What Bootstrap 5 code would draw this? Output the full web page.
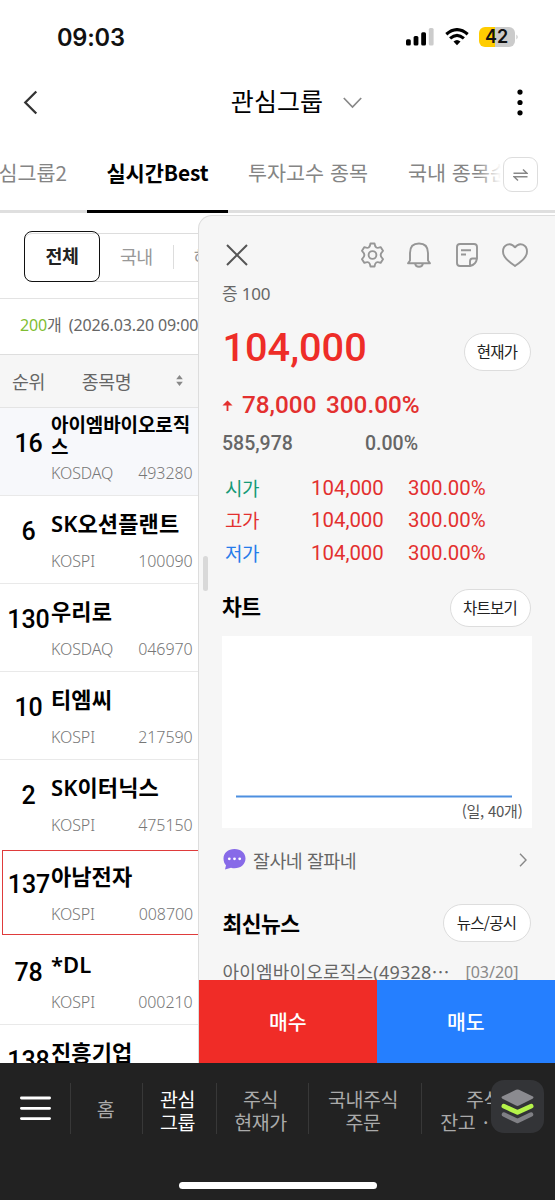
<!DOCTYPE html>
<html lang="ko">
<head>
<meta charset="utf-8">
<meta name="viewport" content="width=device-width, initial-scale=1">
<title>관심그룹</title>
<link href="https://cdn.jsdelivr.net/npm/bootstrap@5.3.0/dist/css/bootstrap.min.css" rel="stylesheet">
<style>
body{font-family:"Noto Sans","Noto Sans CJK KR",sans-serif;color:#111;background:#fff;line-height:1}
.screen{width:555px;height:1200px}
.kr{font-family:"Noto Sans CJK KR",sans-serif}
.rb{font-family:Roboto,sans-serif}
.red{color:#e3302f}
.status{height:75px;font-family:Inter,sans-serif}
.status .clock{font-size:23.6px;font-weight:600;left:57px;letter-spacing:-.2px}
.battery{width:36px;height:20px;border-radius:6px;background:linear-gradient(90deg,#fc0 44%,#cbcbcb 44%);font-size:18px;font-weight:600;line-height:20px;color:#111}
.titlebar{height:56px}
.titlebar h1{font-size:25px;font-weight:400;letter-spacing:.1px;line-height:36px;color:#000}
.tabs{height:82px;border-bottom:3px solid #dfdfdf}
.tabs .tab{height:82px;line-height:83px;font-size:20.7px;color:#858585;white-space:nowrap}
.tabs .tab.active{color:#000;font-weight:700;font-size:20.9px;letter-spacing:-.1px;border-bottom:3px solid #000}
.switcher{right:0;top:0;width:78px;height:79px;padding-left:26px;background:linear-gradient(90deg,#fff0,#fff 24px)}
.switcher .box{width:35px;height:35px;margin-top:8px;border:1px solid #ddd;border-radius:9px;background:#fff}
.main{height:850px}
.listcol{width:198px;flex:none}
.filters{height:85.5px;border-bottom:1.5px solid #e3e3e3;padding:19.5px 0 0 24px}
.filters .strip{width:500px;height:49px;border:1px solid #ddd;border-radius:8px;font-size:18.4px;color:#999}
.filters .all{width:76px;height:51px;margin:-1px 0 0 -1px;border:1.6px solid #111;border-radius:8px;color:#222;font-weight:700;letter-spacing:-.5px}
.stamp{height:56.7px;border-bottom:1.5px solid #dedede;padding:0 0 2px 20px;font-size:16px;color:#666;white-space:nowrap;letter-spacing:-.12px}
.thead-row{height:52.5px;background:#f6f6f6;border-bottom:1.5px solid #e4e4e4;font-size:18.4px;color:#666;letter-spacing:-.5px}
.stock{height:88.2px;border-bottom:1.4px solid #e9e9e9;display:grid;grid-template-columns:51px 1fr}
.stock.sel{background:#f7f8fb}
.stock.mine{border:1.6px solid #df3b3b;border-right:0;margin:1.5px 0 1.5px 1.5px;height:85.2px;grid-template-columns:47.9px 1fr}
.rank{font-size:25px;font-weight:500;line-height:29px;padding-top:21px;width:57px;text-align:center;color:#000;letter-spacing:-.1px}
.stock.mine .rank{padding-top:18.5px;margin-left:-2px}
.name{font-size:22px;font-weight:600;line-height:28px;height:46px;padding-top:13px;color:#000;letter-spacing:.1px}
.name.two{font-size:19px;line-height:22px;height:46px;padding-top:6.5px;letter-spacing:-.1px}
.stock.mine .name,.stock.mine .meta{position:relative;top:-2px;left:.5px}
.meta{font-size:16px;color:#777;line-height:18px;padding:10px 5.5px 0 0;font-weight:300;letter-spacing:-.1px}
.panel{background:#f6f6f6;border:1.5px solid #ddd;border-right:0;border-bottom:0;border-radius:14px 0 0 0;width:357px;margin-top:2px;height:848px}
.inner{padding:8px 24.5px 0 23px}
.handle{left:203px;top:343px;width:5px;height:35px;border-radius:3px;background:#d9d9d9}
.icons{height:62px;margin-left:4px;padding-right:3px;color:#969696}
.margin-rate{font-size:17px;color:#666;line-height:16px;letter-spacing:-.2px}
.pill{background:#fff;border:1.3px solid #ddd;border-radius:20px;height:37.5px;color:#222;font-size:15.5px;letter-spacing:-.7px}
.price{font-size:39.7px;font-weight:500;letter-spacing:0;color:#ee2d28;line-height:47px}
.change{font-size:24.3px;font-weight:500;line-height:28px}
.volume{font-size:19.5px;font-weight:500;color:#666;line-height:24px}
.ohl{height:32.6px;font-size:20.4px;line-height:32px}
.ohl .lbl{width:86px;font-size:19px;letter-spacing:-.6px}
.sec{font-size:21.5px;font-weight:700;letter-spacing:-.5px;color:#000}
.chart{height:192px;background:#fff;margin:9px -1px 0 0;color:#555;font-size:15px}
.talk{height:64px;font-size:18.4px;color:#666;letter-spacing:-.5px}
.news{font-size:18px;color:#666;line-height:24px;padding-top:17px;white-space:nowrap;letter-spacing:.2px}
.trade{height:83.5px;left:0;right:0;bottom:0;font-size:20.5px;font-weight:500;color:#fff;letter-spacing:-.2px}
.buy{background:#f02c27;width:178px}.sell{background:#257fff;width:179px}
.bottom{height:137px;background:#222;color:#aaa;font-size:19.5px;line-height:23px;letter-spacing:-.5px}
.bottom .item{height:51px;margin-top:20px;border-left:1px solid #383838;text-align:center;white-space:nowrap;flex:none}
.fab{left:491px;top:17px;width:53px;height:53px;border-radius:13px;background:#333437}
.homebar{left:179px;top:119px;width:198px;height:7px;border-radius:4px;background:#fff}
</style>
</head>
<body>
<div class="screen position-relative overflow-hidden">
  <header class="status position-relative d-flex align-items-center">
    <div class="clock position-absolute">09:03</div>
    <div class="d-flex align-items-center ms-auto" style="padding-right:39.5px;padding-bottom:1px">
      <svg width="28" height="18" viewBox="0 0 28 18"><g fill="#000"><rect x="0" y="11.2" width="4.8" height="6.3" rx="1.5"/><rect x="7.6" y="8" width="4.8" height="9.5" rx="1.5"/><rect x="15.2" y="4.2" width="4.8" height="13.3" rx="1.5"/></g><rect x="22.8" y="0" width="4.8" height="17.5" rx="1.5" fill="#ccc"/></svg>
      <svg width="24" height="18" viewBox="0 0 24 18" style="margin-left:11px"><g fill="none" stroke="#000" stroke-width="3.1"><path d="M1.3 6.2Q12-3 22.7 6.2"/><path d="M5.1 10.4Q12 4.2 18.9 10.4"/></g><path d="M8.500 13.600Q12 10.600 15.500 13.600L12 17.300Z"/></svg>
      <div class="battery text-center" style="margin-left:10px">42</div>
      <svg width="3" height="8" viewBox="0 0 3 8" style="margin:0 -3px 0 1px"><path d="M.5 1.500Q2.700 4 .5 6.500Z" fill="#bbb"/></svg>
    </div>
  </header>
  <div class="titlebar position-relative d-flex justify-content-center align-items-center">
    <svg class="position-absolute" style="left:23px;top:15px" width="16" height="25" viewBox="0 0 16 25" fill="none" stroke="#333" stroke-width="2.300"><path d="M13.300 1.500L2.300 12.500L13.300 23.500"/></svg>
    <h1 class="kr m-0" style="padding-left:38px;padding-bottom:6px">관심그룹</h1>
    <svg style="margin-left:20px;margin-top:-1px" width="19" height="12" viewBox="0 0 19 12" fill="none" stroke="#888" stroke-width="1.700"><path d="M.8 1L9.500 10L18.200 1"/></svg>
    <svg class="position-absolute" style="right:32px;top:14px" width="6" height="28" viewBox="0 0 6 28"><circle cx="3" cy="3.100" r="2.600"/><circle cx="3" cy="13.500" r="2.600"/><circle cx="3" cy="23.800" r="2.600"/></svg>
  </div>
  <nav class="tabs position-relative d-flex">
    <div class="tab kr d-flex justify-content-end flex-shrink-0" style="width:87px;padding-right:20px">심그룹2</div>
    <div class="tab kr active text-center flex-shrink-0" style="width:141px">실시간Best</div>
    <div class="tab kr text-center flex-shrink-0" style="width:160px">투자고수 종목</div>
    <div class="tab kr overflow-hidden" style="width:167px;height:79px;padding-left:20px">국내 종목순위</div>
    <div class="switcher position-absolute d-flex align-items-center"><div class="box d-flex align-items-center justify-content-center">
      <svg width="15" height="14" viewBox="0 0 15 14" fill="none" stroke="#888" stroke-width="1.500"><path d="M.5 5.300H14L10 1.500M14.500 8.700H1L5 12.500"/></svg></div></div>
  </nav>
  <main class="main position-relative d-flex overflow-hidden">
    <section class="listcol overflow-hidden">
      <div class="filters"><div class="strip kr d-flex align-items-center"><div class="all d-flex align-items-center justify-content-center" style="padding-bottom:2px">전체</div><span style="margin-left:20px;letter-spacing:-.6px;padding-bottom:2px">국내</span><span style="width:1px;height:24px;background:#ddd;margin-left:20px"></span><span style="margin-left:20px;padding-bottom:2px">해외</span></div></div>
      <div class="stamp d-flex align-items-center"><span style="color:#7fbd32">200</span><span>개</span><span style="margin-left:7px">(2026.03.20 09:00:00)</span></div>
      <div class="thead-row kr d-flex align-items-center"><span style="padding-left:12px">순위</span><span style="padding-left:37px">종목명</span>
        <svg width="7" height="11" viewBox="0 0 7 11" style="margin-left:45px" fill="#888"><path d="M3.500 0L6.800 4.200H.2ZM3.500 11L6.800 6.800H.2Z"/></svg></div>
      <div class="stock sel"><div class="rank rb">16</div><div><div class="name two">아이엠바이오로직<br>스</div><div class="meta d-flex justify-content-between"><span>KOSDAQ</span><span>493280</span></div></div></div>
      <div class="stock"><div class="rank rb">6</div><div><div class="name">SK오션플랜트</div><div class="meta d-flex justify-content-between"><span>KOSPI</span><span>100090</span></div></div></div>
      <div class="stock"><div class="rank rb">130</div><div><div class="name">우리로</div><div class="meta d-flex justify-content-between"><span>KOSDAQ</span><span>046970</span></div></div></div>
      <div class="stock"><div class="rank rb">10</div><div><div class="name">티엠씨</div><div class="meta d-flex justify-content-between"><span>KOSPI</span><span>217590</span></div></div></div>
      <div class="stock" style="border-color:transparent"><div class="rank rb">2</div><div><div class="name">SK이터닉스</div><div class="meta d-flex justify-content-between"><span>KOSPI</span><span>475150</span></div></div></div>
      <div class="stock mine"><div class="rank rb">137</div><div><div class="name">아남전자</div><div class="meta d-flex justify-content-between"><span>KOSPI</span><span>008700</span></div></div></div>
      <div class="stock"><div class="rank rb">78</div><div><div class="name">*DL</div><div class="meta d-flex justify-content-between"><span>KOSPI</span><span>000210</span></div></div></div>
      <div class="stock"><div class="rank rb">138</div><div><div class="name">진흥기업</div></div></div>
    </section>
    <section class="panel position-relative overflow-hidden flex-shrink-0">
      <div class="inner">
        <div class="icons d-flex align-items-center">
          <svg width="22" height="22" viewBox="0 0 22 22" stroke="#555" stroke-width="2"><path d="M1 1L21 21M21 1L1 21"/></svg>
          <svg class="ms-auto" width="25" height="26" viewBox="0 0 25 26" fill="none" stroke="currentColor" stroke-width="1.900" stroke-linejoin="round"><path d="M10.500 1.500h4q.5 3.200 1.800 4t4.300-.4l2.400 3.700q-2.400 2.400-2.400 4.200t2.400 4.200l-2.400 3.700q-3-1.200-4.300-.4t-1.800 4h-4q-.5-3.200-1.800-4t-4.300.4L2 17.200Q4.400 14.800 4.400 13T2 8.800L4.400 5.100q3 1.200 4.300.4t1.800-4Z"/><circle cx="12.500" cy="13" r="3.900"/></svg>
          <svg style="margin-left:22px" width="24" height="26" viewBox="0 0 24 26" fill="none" stroke="currentColor" stroke-width="1.900" stroke-linejoin="round"><path d="M3 18.500V11Q3 1.500 12 1.500T21 11V18.500L23 21.200H1ZM8 21.300Q8.500 24.700 12 24.700T16 21.300"/></svg>
          <svg style="margin-left:25px" width="22" height="24" viewBox="0 0 22 24" fill="none" stroke="currentColor" stroke-width="1.900" stroke-linejoin="round"><path d="M14 23H4Q1 23 1 20V4Q1 1 4 1H18Q21 1 21 4V15.500Q20 21.500 14 23V18.500Q14 15.500 16.500 15.500H21M5 7.200H15M5 11.500H10"/></svg>
          <svg style="margin-left:24px" width="26" height="24" viewBox="0 0 26 24" fill="none" stroke="currentColor" stroke-width="1.900" stroke-linejoin="round"><path d="M13 4.300C8.500-1.500 1 1.500 1 8.500C1 14.500 7 18.500 13 23C19 18.500 25 14.500 25 8.500C25 1.500 17.500-1.500 13 4.300Z"/></svg>
        </div>
        <div class="margin-rate">증 100</div>
        <div class="d-flex align-items-center" style="height:56px;margin-top:22px"><span class="price rb" style="padding:0 0 9px .5px">104,000</span><span class="pill kr d-flex align-items-center justify-content-center ms-auto" style="width:67px">현재가</span></div>
        <div class="change rb red d-flex align-items-center" style="margin-top:11px"><svg width="11" height="11" viewBox="0 0 12 12"><path d="M6 .5L11.500 6H7V12H5V6H.5Z" fill="currentColor"/></svg><span style="margin-left:9px">78,000</span><span style="margin-left:9.500px;width:94px" class="overflow-hidden">300.00%</span></div>
        <div class="volume rb d-flex" style="margin-top:12.500px"><span style="width:143px">585,978</span><span>0.00%</span></div>
        <div style="margin:16px 0 20px 3px">
          <div class="ohl rb red d-flex"><span class="lbl kr" style="color:#159a77">시가</span><span style="width:97px">104,000</span><span>300.00%</span></div>
          <div class="ohl rb red d-flex"><span class="lbl kr">고가</span><span style="width:97px">104,000</span><span>300.00%</span></div>
          <div class="ohl rb red d-flex"><span class="lbl kr" style="color:#267bea">저가</span><span style="width:97px">104,000</span><span>300.00%</span></div>
        </div>
        <div class="d-flex align-items-center"><span class="sec kr" style="padding-bottom:5px">차트</span><span class="pill kr d-flex align-items-center justify-content-center ms-auto" style="width:81px">차트보기</span></div>
        <div class="chart d-flex flex-column justify-content-end"><svg width="309" height="3" viewBox="0 0 309 3"><path d="M14 1.500H290" stroke="#4d8fe0" stroke-width="1.800"/></svg><div class="text-end kr" style="padding:4px 9px 9px;line-height:17px;letter-spacing:-.25px">(일, 40개)</div></div>
        <div class="talk kr d-flex align-items-center"><svg width="23" height="21" viewBox="0 0 23 21" style="margin-left:.5px"><path d="M11.500 0C5 0 .5 4 .5 9.500C.5 12.500 1.500 14.800 3 16.300L2 20.500L8 18.800Q10 19.300 11.500 19.300C18 19.300 22.500 15 22.500 9.500S18 0 11.500 0Z" fill="#876ae8"/><g fill="#fff"><circle cx="6.300" cy="9.800" r="1.400"/><circle cx="11.500" cy="9.800" r="1.400"/><circle cx="16.700" cy="9.800" r="1.400"/></g></svg><span style="margin-left:7.500px">잘사네 잘파네</span><svg class="ms-auto" style="margin-right:4px" width="8" height="14" viewBox="0 0 8 14" fill="none" stroke="#888" stroke-width="1.400"><path d="M1 .8L7 7L1 13.200"/></svg></div>
        <div class="d-flex align-items-center" style="margin-top:12.500px"><span class="sec kr" style="padding-left:.5px">최신뉴스</span><span class="pill kr d-flex align-items-center justify-content-center ms-auto" style="width:88px">뉴스/공시</span></div>
        <div class="news d-flex justify-content-between"><span style="padding-left:.5px">아이엠바이오로직스(49328<span class="kr">⋯</span></span><span style="padding:1px 12px 0 0;font-size:16px;letter-spacing:0;color:#888">[03/20]</span></div>
      </div>
      <div class="trade kr position-absolute d-flex"><div class="buy d-flex align-items-center justify-content-center">매수</div><div class="sell d-flex align-items-center justify-content-center">매도</div></div>
    </section>
    <div class="handle position-absolute"></div>
  </main>
  <footer class="bottom kr position-relative d-flex overflow-hidden">
    <div style="width:70px;padding:31px 0 0 20px" class="flex-shrink-0"><svg width="31" height="26" viewBox="0 0 31 26" stroke="#fff" stroke-width="2.800" stroke-linecap="round"><path d="M1.400 2H29.600M1.400 12.300H29.600M1.400 22.600H29.600"/></svg></div>
    <div class="item d-flex align-items-center justify-content-center" style="width:72px;padding-right:2px">홈</div>
    <div class="item text-white" style="width:74px;padding:3.500px 4px 0 0">관심<br>그룹</div>
    <div class="item" style="width:92px;padding:3.500px 4px 0 0">주식<br>현재가</div>
    <div class="item" style="width:113px;padding:3.500px 4px 0 0">국내주식<br>주문</div>
    <div class="item" style="width:124px;padding:3.500px 0 0">주식<br><span style="word-spacing:3px;padding-left:4px">잔고 · 손익</span></div>
    <div class="fab position-absolute d-flex align-items-center justify-content-center"><svg width="33" height="35" viewBox="0 0 33 35"><path d="M3 25.500L16.500 32L30 25.500" fill="none" stroke="#808085" stroke-width="4.500" stroke-linecap="round" stroke-linejoin="round"/><path d="M3 18L16.500 24L30 18" fill="none" stroke="#333437" stroke-width="6" stroke-linecap="round"/><path d="M2.800 17.200L16.500 23.400L30.200 17.200" fill="none" stroke="#b5f34a" stroke-width="4.600" stroke-linecap="round" stroke-linejoin="round"/><path d="M15 .8Q16.500 0 18 .8L31.500 7.300Q33.500 8.500 31.500 9.700L18 16.500Q16.500 17.300 15 16.500L1.500 9.700Q-.5 8.500 1.500 7.300Z" fill="#8b8b90"/></svg></div>
    <div class="homebar position-absolute"></div>
  </footer>
</div>
<script src="https://cdn.jsdelivr.net/npm/bootstrap@5.3.0/dist/js/bootstrap.bundle.min.js"></script>
</body>
</html>
